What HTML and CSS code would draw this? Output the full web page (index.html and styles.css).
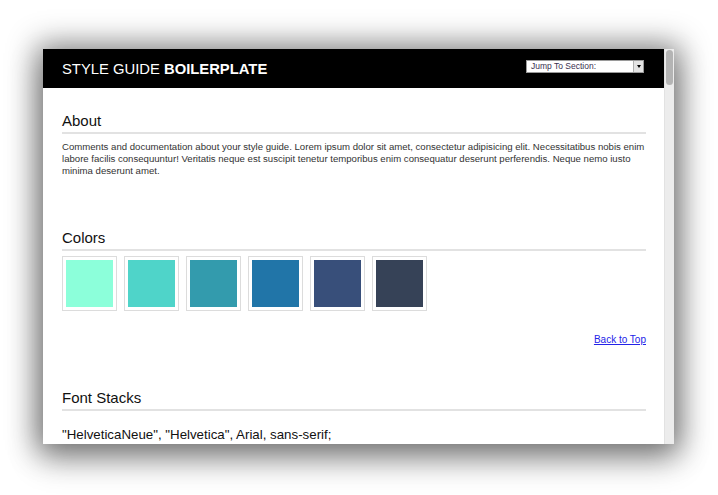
FILE: index.html
```html
<!DOCTYPE html>
<html>
<head>
<meta charset="utf-8">
<link rel="stylesheet" href="styles.css">
</head>
<body>
<div class="window">
  <div class="viewport">
    <header class="topbar">
      <h1 class="title">STYLE GUIDE <strong>BOILERPLATE</strong></h1>
      <div class="jump">
        <span class="jump-label">Jump To Section:</span>
        <span class="jump-btn"><span class="arrow"></span></span>
      </div>
    </header>
    <main class="content">
      <section class="about">
        <h2 class="heading">About</h2>
        <p class="intro">Comments and documentation about your style guide. Lorem ipsum dolor sit amet, consectetur adipisicing elit. Necessitatibus nobis enim labore facilis consequuntur! Veritatis neque est suscipit tenetur temporibus enim consequatur deserunt perferendis. Neque nemo iusto minima deserunt amet.</p>
      </section>
      <section class="colors">
        <h2 class="heading">Colors</h2>
        <div class="swatches">
          <div class="swatch"><div class="chip c1"></div></div>
          <div class="swatch"><div class="chip c2"></div></div>
          <div class="swatch"><div class="chip c3"></div></div>
          <div class="swatch"><div class="chip c4"></div></div>
          <div class="swatch"><div class="chip c5"></div></div>
          <div class="swatch"><div class="chip c6"></div></div>
        </div>
        <div class="back"><a href="#top">Back to Top</a></div>
      </section>
      <section class="fonts">
        <h2 class="heading">Font Stacks</h2>
        <p class="stack">"HelveticaNeue", "Helvetica", Arial, sans-serif;</p>
      </section>
    </main>
  </div>
  <div class="scrollbar"><div class="thumb"></div></div>
</div>
</body>
</html>
```
FILE: styles.css
```css
html, body {
  margin: 0;
  padding: 0;
  background: #fff;
}
body {
  padding: 49px 0 60px 43px;
  font-family: "Liberation Sans", Arial, sans-serif;
  color: #222;
}
.window {
  width: 631px;
  height: 395px;
  display: flex;
  overflow: hidden;
  background: #fff;
  box-shadow: 0 0 28px 6px rgba(0, 0, 0, 0.42), 0 14px 30px 2px rgba(0, 0, 0, 0.3);
}
.viewport {
  width: 621px;
  flex: none;
}
.scrollbar {
  width: 10px;
  background: #ececec;
  border-left: 1px solid #e2e2e2;
  padding: 1px 1px 0 1px;
  box-sizing: border-box;
}
.thumb {
  height: 35px;
  background: #b4b4b4;
  border-radius: 4px;
}
.topbar {
  height: 39px;
  background: #000;
  display: flex;
  align-items: center;
  justify-content: space-between;
  padding: 0 19px 0 19px;
  box-sizing: border-box;
}
.title {
  margin: 0;
  font-size: 14.8px;
  font-weight: normal;
  color: #fff;
  line-height: 18px;
  padding-top: 1px;
}
.title strong {
  font-weight: bold;
}
.jump {
  width: 118px;
  height: 13px;
  background: #fff;
  border: 1px solid #9a9a9a;
  box-sizing: border-box;
  display: flex;
  align-items: center;
  margin-top: -5px;
  margin-right: 1px;
}
.jump-label {
  flex: 1;
  font-size: 8.5px;
  color: #3a3050;
  padding-left: 4px;
  line-height: 11px;
}
.jump-btn {
  width: 9px;
  height: 11px;
  background: #e4e4e4;
  border-left: 1px solid #b0b0b0;
  display: flex;
  align-items: center;
  justify-content: center;
}
.arrow {
  width: 0;
  height: 0;
  border-left: 2.5px solid transparent;
  border-right: 2.5px solid transparent;
  border-top: 3px solid #000;
}
.content {
  padding: 24px 18px 0 19px;
}
.heading {
  margin: 0;
  font-size: 15px;
  font-weight: normal;
  color: #111;
  line-height: 18px;
  padding-bottom: 2px;
  border-bottom: 2px solid #e2e2e2;
}
.intro {
  margin: 7px 0 0 0;
  font-size: 9.6px;
  line-height: 12px;
  color: #333;
}
.colors {
  margin-top: 52px;
}
.swatches {
  display: flex;
  gap: 7px;
  margin-top: 5px;
}
.swatch {
  border: 1px solid #dcdcdc;
  padding: 3px;
  background: #fff;
}
.chip {
  width: 47px;
  height: 47px;
}
.c1 { background: #8cffda; }
.c2 { background: #4fd4c9; }
.c3 { background: #339bad; }
.c4 { background: #2175a8; }
.c5 { background: #384f7a; }
.c6 { background: #364257; }
.back {
  text-align: right;
  margin-top: 23px;
  font-size: 10px;
  line-height: 12px;
}
.back a {
  color: #2323e8;
  text-decoration: underline;
}
.fonts {
  margin-top: 43px;
}
.stack {
  margin: 16px 0 0 0;
  font-size: 13.3px;
  line-height: 16px;
  color: #111;
}
```
